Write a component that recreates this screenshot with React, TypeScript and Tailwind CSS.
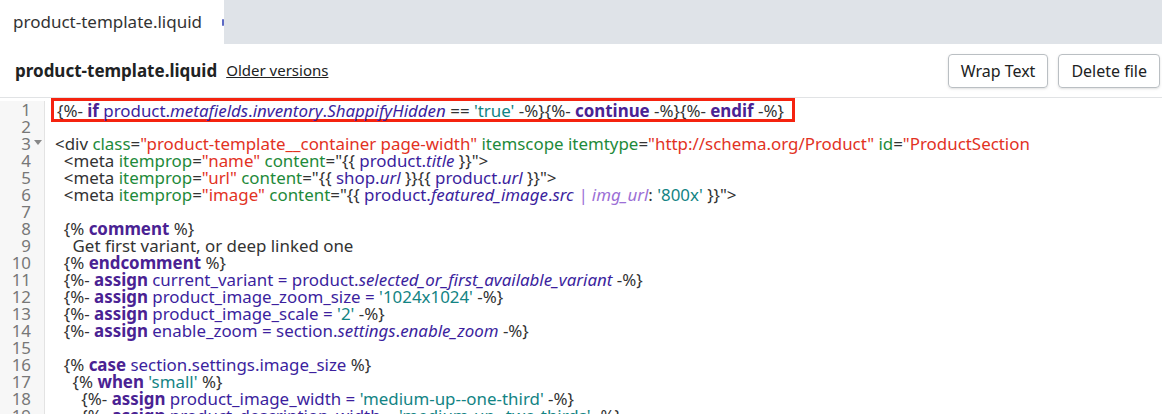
import React from "react";

type Tok = [string, string?];

const K = "font-bold text-[#4a2293]";
const V = "text-[#3c1f9e]";
const I = "italic text-[#3c1f9e]";
const S = "text-[#138484]";
const A = "text-[#1e8a3a]";
const R = "text-[#e2321f]";
const F = "italic text-[#9c6fd6]";
const P = "text-[#333]";

const lines: Tok[][] = [
  [["{%- "], ["if", K], [" product.", V], ["metafields", I], [".", V], ["inventory", I], [".", V], ["ShappifyHidden", I], [" == "], ["'true'", S], [" -%}{%- "], ["continue", K], [" -%}{%- "], ["endif", K], [" -%}"]],
  [],
  [["<div "], ["class", A], ["="], ["\"product-template__container page-width\"", R], [" itemscope ", A], ["itemtype", A], ["="], ["\"http://schema.org/Product\"", R], [" id", A], ["="], ["\"ProductSection", R]],
  [["  <meta "], ["itemprop", A], ["="], ["\"name\"", R], [" content", A], ["=\"{{ "], ["product.", V], ["title", I], [" }}\">"]],
  [["  <meta "], ["itemprop", A], ["="], ["\"url\"", R], [" content", A], ["=\"{{ "], ["shop.", V], ["url", I], [" }}{{ "], ["product.", V], ["url", I], [" }}\">"]],
  [["  <meta "], ["itemprop", A], ["="], ["\"image\"", R], [" content", A], ["=\"{{ "], ["product.", V], ["featured_image", I], [".", V], ["src", I], [" | ", F], ["img_url", F], [": "], ["'800x'", S], [" }}\">"]],
  [],
  [["  {% "], ["comment", K], [" %}"]],
  [["    Get first variant, or deep linked one"]],
  [["  {% "], ["endcomment", K], [" %}"]],
  [["  {%- "], ["assign", K], [" current_variant = product.", V], ["selected_or_first_available_variant", I], [" -%}"]],
  [["  {%- "], ["assign", K], [" product_image_zoom_size = ", V], ["'1024x1024'", S], [" -%}"]],
  [["  {%- "], ["assign", K], [" product_image_scale = ", V], ["'2'", S], [" -%}"]],
  [["  {%- "], ["assign", K], [" enable_zoom = section.", V], ["settings", I], [".", V], ["enable_zoom", I], [" -%}"]],
  [],
  [["  {% "], ["case", K], [" section.settings.image_size", V], [" %}"]],
  [["    {% "], ["when", K], [" "], ["'small'", S], [" %}"]],
  [["      {%- "], ["assign", K], [" product_image_width = ", V], ["'medium-up--one-third'", S], [" -%}"]],
  [["      {%- "], ["assign", K], [" product_description_width = ", V], ["'medium-up--two-thirds'", S], [" -%}"]],
];

export default function App() {
  return (
    <div className="w-[1162px] h-[414px] overflow-hidden bg-white font-['Liberation_Sans'] text-[#202223]">
      <div className="flex h-[44px] bg-[#dfe3e8]">
        <div className="flex w-[224px] items-center gap-[20px] whitespace-nowrap bg-white pl-[13px] text-[17px] text-[#333]">
          product-template.liquid
          <span className="h-[7px] w-[7px] rounded-full bg-[#5c6ac4]" />
        </div>
      </div>
      <div className="flex h-[54px] items-center border-b border-[#e1e3e5] pl-[15px] pr-[2px]">
        <span className="text-[17px] font-bold">product-template.liquid</span>
        <span className="ml-[9px] text-[15px] underline">Older versions</span>
        <div className="ml-auto flex gap-[10px]">
          <button className="h-[34px] rounded-[4px] border border-[#babfc3] px-[12px] text-[16px] shadow-sm">Wrap Text</button>
          <button className="h-[34px] rounded-[4px] border border-[#babfc3] px-[12px] text-[16px] shadow-sm">Delete file</button>
        </div>
      </div>
      <div className="flex pt-[3px] font-['Liberation_Mono'] text-[16.9px] leading-[17px]">
        <div className="w-[45px] shrink-0 border-r border-[#e3e3e3] bg-[#f7f7f7] text-[#777]">
          {lines.map((_, i) => (
            <div key={i} className="relative flex h-[17px] items-center justify-end pr-[13px]">
              {i + 1}
              {i === 2 && <span className="absolute right-[2px] top-[5px] h-0 w-0 border-x-[4px] border-t-[5px] border-x-transparent border-t-[#888]" />}
            </div>
          ))}
        </div>
        <div className="whitespace-pre pl-[10px] text-[#222]">
          {lines.map((ln, i) => (
            <div key={i} className="flex h-[17px]">
              <span className={i === 0 ? "-ml-[4px] -my-[3px] h-[24px] border-[3px] border-[#f5230f] py-[2px] pl-[3px] pr-[8px] leading-[15px]" : ""}>
                {ln.length === 0 ? " " : ln.map(([t, c], j) => <span key={j} className={c ?? P}>{t}</span>)}
              </span>
            </div>
          ))}
        </div>
      </div>
    </div>
  );
}
